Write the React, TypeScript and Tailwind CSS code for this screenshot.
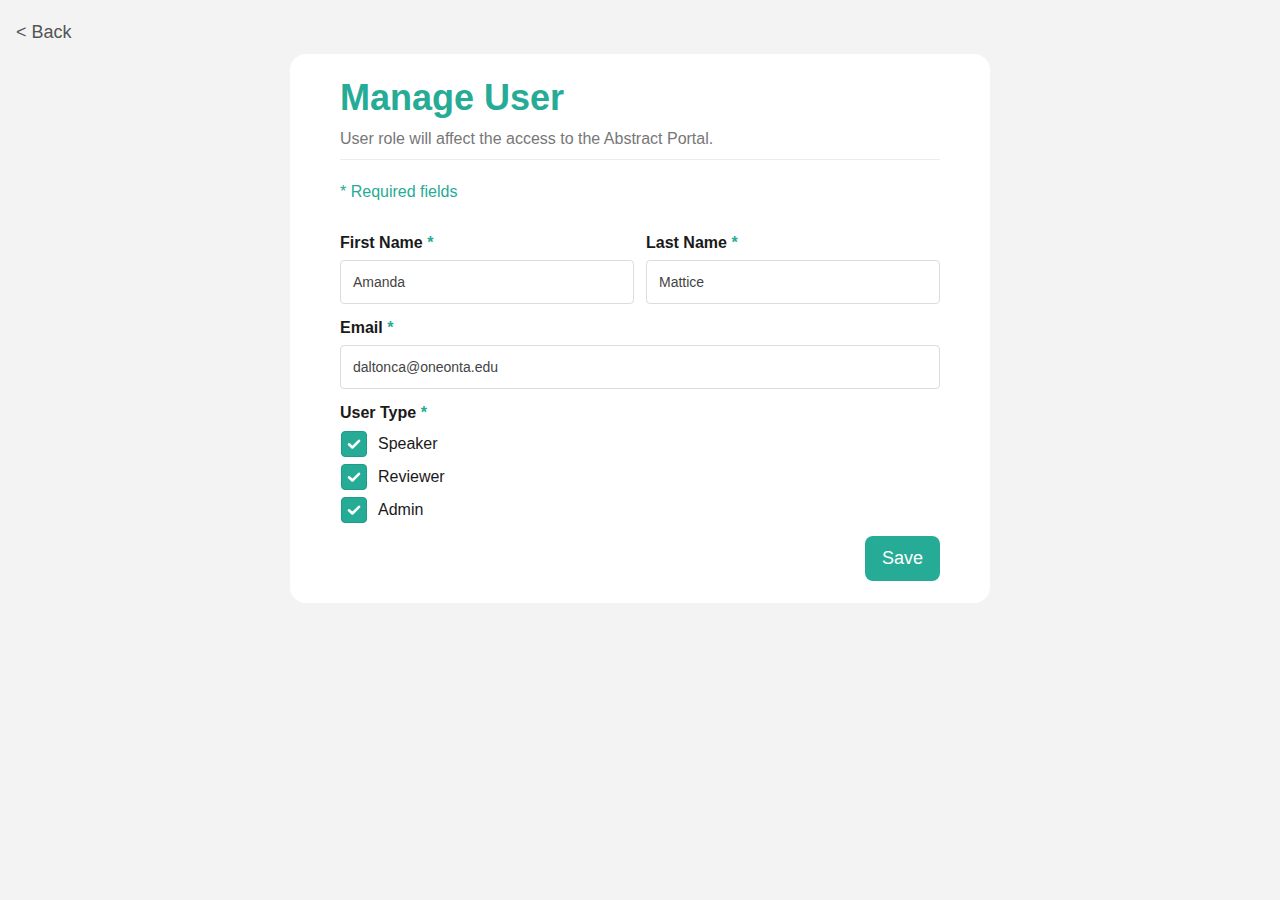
import React from "react";

const Check = () => (
  <span className="ml-[1px] flex h-[26px] w-[26px] items-center justify-center rounded-[4px] bg-[#26ab96] border border-[#1f9c88]">
    <svg width="16" height="16" viewBox="0 0 16 16" fill="none">
      <path d="M3 8.3 L6.4 11.5 L13 4.8" stroke="white" strokeWidth="2.6" strokeLinecap="round" strokeLinejoin="round" />
    </svg>
  </span>
);

const Label = ({ children }: { children: React.ReactNode }) => (
  <div className="text-[16px] leading-[20px] font-bold text-[#1a1a1a]">
    {children} <span className="text-[#26ab96]">*</span>
  </div>
);

const Input = ({ value }: { value: string }) => (
  <div className="flex h-[44px] items-center rounded-[4px] border border-[#dcdcdc] bg-white px-[12px] text-[14px] text-[#444]">
    {value}
  </div>
);

export default function App() {
  return (
    <div className="min-h-[900px] bg-[#f3f3f3] font-['Liberation_Sans',Arial,sans-serif]">
      <div className="px-[16px] pt-[20px] text-[18px] leading-[24px] text-[#555]">&lt; Back</div>
      <div className="mx-auto mt-[10px] w-[700px] rounded-[16px] bg-white px-[50px] pt-[24px] pb-[22px]">
        <h1 className="text-[36px] leading-[40px] font-bold text-[#26ab96]">Manage User</h1>
        <p className="mt-[9px] border-b border-[#ececec] pb-[8px] text-[16px] leading-[24px] text-[#777]">
          User role will affect the access to the Abstract Portal.
        </p>
        <p className="mt-[20px] text-[16px] leading-[24px] text-[#26ab96]">* Required fields</p>
        <div className="mt-[29px] grid grid-cols-2 gap-x-[12px]">
          <div className="flex flex-col gap-[7px]">
            <Label>First Name</Label>
            <Input value="Amanda" />
          </div>
          <div className="flex flex-col gap-[7px]">
            <Label>Last Name</Label>
            <Input value="Mattice" />
          </div>
        </div>
        <div className="mt-[14px] flex flex-col gap-[7px]">
          <Label>Email</Label>
          <Input value="daltonca@oneonta.edu" />
        </div>
        <div className="mt-[14px]">
          <Label>User Type</Label>
          <div className="mt-[8px] flex flex-col gap-[7px]">
            {["Speaker", "Reviewer", "Admin"].map((t) => (
              <label key={t} className="flex items-center gap-[11px] text-[16px] text-[#1a1a1a]">
                <Check />
                {t}
              </label>
            ))}
          </div>
        </div>
        <div className="mt-[13px] flex justify-end">
          <button className="h-[45px] w-[75px] rounded-[8px] bg-[#26ab96] text-[18px] text-white">Save</button>
        </div>
      </div>
    </div>
  );
}
